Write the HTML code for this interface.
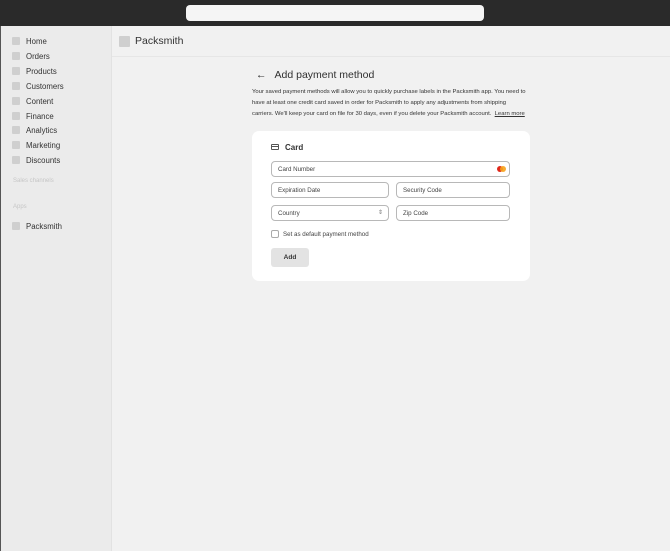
<!DOCTYPE html>
<html><head><style>
*{margin:0;padding:0;box-sizing:border-box}
body{width:670px;height:551px;font-family:"Liberation Sans",sans-serif;background:#f1f1f1;position:relative;overflow:hidden;color:#303030}
.top{position:absolute;left:0;top:0;width:670px;height:26px;background:#2a2a2a}
.search{position:absolute;left:186px;top:5px;width:298px;height:16px;background:#f5f5f5;border-radius:4px}
.side{position:absolute;left:0;top:26px;width:112px;height:525px;background:#ebebeb;border-left:1px solid #555;border-right:1px solid #e2e2e2}
.nav{position:absolute;left:11px;font-size:7.8px;color:#333;display:flex;align-items:center;height:10px}
.nav i{width:8px;height:8px;background:#cfcfcf;display:inline-block;margin-right:6px;border-radius:1px}
.sec{position:absolute;left:12px;font-size:6px;color:#c6c6c6}
.hdr{position:absolute;left:112px;top:26px;width:558px;height:31px;border-bottom:1px solid #e6e6e6}
.hdr i{position:absolute;left:7px;top:10px;width:11px;height:11px;background:#cfcfcf;border-radius:1px}
.hdr span{position:absolute;left:23px;top:9px;font-size:10.5px;color:#333}
.title{position:absolute;left:256px;top:69px;font-size:10.5px;color:#303030}
.title b{font-weight:normal;margin-right:8px}
.para{position:absolute;left:252px;top:87px;width:276px;font-size:5.9px;line-height:11px;color:#333}
.card{position:absolute;left:252px;top:131px;width:278px;height:150px;background:#fff;border-radius:7px}
.inp{position:absolute;height:16px;border:1px solid #b8b8b8;border-radius:4px;font-size:6.2px;padding-left:6px;display:flex;align-items:center;color:#444;background:#fff}
.btn{position:absolute;left:19px;top:117px;width:38px;height:19px;background:#e3e3e3;border-radius:3px;font-size:6.5px;font-weight:bold;text-align:center;line-height:19px;color:#333}
</style></head><body>
<div class="top"><div class="search"></div></div>
<div class="side">
<div class="nav" style="top:10px"><i></i>Home</div>
<div class="nav" style="top:25px"><i></i>Orders</div>
<div class="nav" style="top:40px"><i></i>Products</div>
<div class="nav" style="top:55px"><i></i>Customers</div>
<div class="nav" style="top:70px"><i></i>Content</div>
<div class="nav" style="top:85px"><i></i>Finance</div>
<div class="nav" style="top:99px"><i></i>Analytics</div>
<div class="nav" style="top:114px"><i></i>Marketing</div>
<div class="nav" style="top:129px"><i></i>Discounts</div>
<div class="sec" style="top:152px">Sales channels</div>
<div class="sec" style="top:178px">Apps</div>
<div class="nav" style="top:195px"><i></i>Packsmith</div>
</div>
<div class="hdr"><i></i><span>Packsmith</span></div>
<div class="title"><b>←</b>Add payment method</div>
<div class="para">Your saved payment methods will allow you to quickly purchase labels in the Packsmith app. You need to have at least one credit card saved in order for Packsmith to apply any adjustments from shipping carriers. We'll keep your card on file for 30 days, even if you delete your Packsmith account. &nbsp;<u>Learn more</u></div>
<div class="card">
<div style="position:absolute;left:19px;top:13px;width:8px;height:6px;border:1.5px solid #555;border-radius:1px;background:linear-gradient(#555,#555) 0 1px/100% 1px no-repeat"></div>
<div style="position:absolute;left:33px;top:12px;font-size:8px;font-weight:bold;color:#333">Card</div>
<div class="inp" style="left:19px;top:30px;width:239px">Card Number
<span style="position:absolute;right:6px;top:4px;width:6px;height:6px;border-radius:50%;background:#e0271a"></span>
<span style="position:absolute;right:3px;top:4px;width:6px;height:6px;border-radius:50%;background:#f6a21b;opacity:.9"></span></div>
<div class="inp" style="left:19px;top:51px;width:118px">Expiration Date</div>
<div class="inp" style="left:144px;top:51px;width:114px">Security Code</div>
<div class="inp" style="left:19px;top:74px;width:118px">Country<span style="position:absolute;right:5px;top:3px;font-size:6px;color:#777">⇕</span></div>
<div class="inp" style="left:144px;top:74px;width:114px">Zip Code</div>
<div style="position:absolute;left:19px;top:99px;width:8px;height:8px;border:1px solid #aaa;border-radius:2px"></div>
<div style="position:absolute;left:31px;top:100px;font-size:6.2px;color:#444">Set as default payment method</div>
<div class="btn">Add</div>
</div>
</body></html>
